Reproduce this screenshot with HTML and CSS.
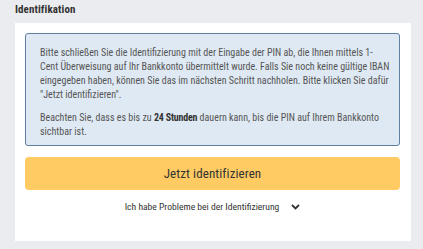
FILE: index.html
```html
<!DOCTYPE html>
<html lang="de">
<head>
<meta charset="utf-8">
<link rel="stylesheet" href="styles.css">
</head>
<body>
<div class="page">
  <h2 class="title">Identifikation</h2>
  <div class="card">
    <div class="info">
      <p>Bitte schließen Sie die Identifizierung mit der Eingabe der PIN ab, die Ihnen mittels 1-<br>Cent Überweisung auf Ihr Bankkonto übermittelt wurde. Falls Sie noch keine gültige IBAN<br>eingegeben haben, können Sie das im nächsten Schritt nachholen. Bitte klicken Sie dafür<br>"Jetzt identifizieren".</p>
      <p>Beachten Sie, dass es bis zu <strong>24 Stunden</strong> dauern kann, bis die PIN auf Ihrem Bankkonto<br>sichtbar ist.</p>
    </div>
    <button class="primary">Jetzt identifizieren</button>
    <div class="help">
      <span>Ich habe Probleme bei der Identifizierung</span>
      <svg class="chev" width="9" height="6" viewBox="0 0 9 6"><path d="M1 1 L4.5 4.5 L8 1" fill="none" stroke="#333" stroke-width="1.8"/></svg>
    </div>
  </div>
</div>
</body>
</html>
```
FILE: styles.css
```css
html, body { margin: 0; padding: 0; }
body {
  background: #ebecf0;
  font-family: "Roboto Condensed", Roboto, sans-serif;
  color: #333;
  width: 423px;
  height: 249px;
  overflow: hidden;
}
.page { padding: 0 12px 0 15px; }
.title {
  margin: 0;
  height: 23px;
  font-size: 11px;
  font-weight: bold;
  line-height: 19px;
  letter-spacing: 0.1px;
  color: #333;
}
.card {
  background: #fff;
  padding: 10px 11px 10px 10px;
  box-sizing: border-box;
  height: 218px;
}
.info {
  background: #dfe9f3;
  border: 1px solid #5f7f9f;
  border-radius: 3px;
  padding: 12px 4px 8px 14px;
  height: 113px;
  box-sizing: border-box;
  color: #555;
  font-size: 10px;
  line-height: 14px;
  letter-spacing: 0;
}
.info p { margin: 0 0 9px 0; }
.info p:last-child { margin-bottom: 0; }
.info strong { color: #333; letter-spacing: -0.2px; }
.primary {
  display: block;
  width: 100%;
  height: 33px;
  margin-top: 11px;
  border: none;
  border-radius: 4px;
  background: #ffcb62;
  color: #333;
  font-family: inherit;
  font-size: 13px;
  letter-spacing: 0.1px;
}
.help {
  display: flex;
  justify-content: center;
  align-items: center;
  gap: 12px;
  margin-top: 11px;
  font-size: 9.6px;
  color: #333;
}
.chev { display: block; margin-top: 1px; }
```
